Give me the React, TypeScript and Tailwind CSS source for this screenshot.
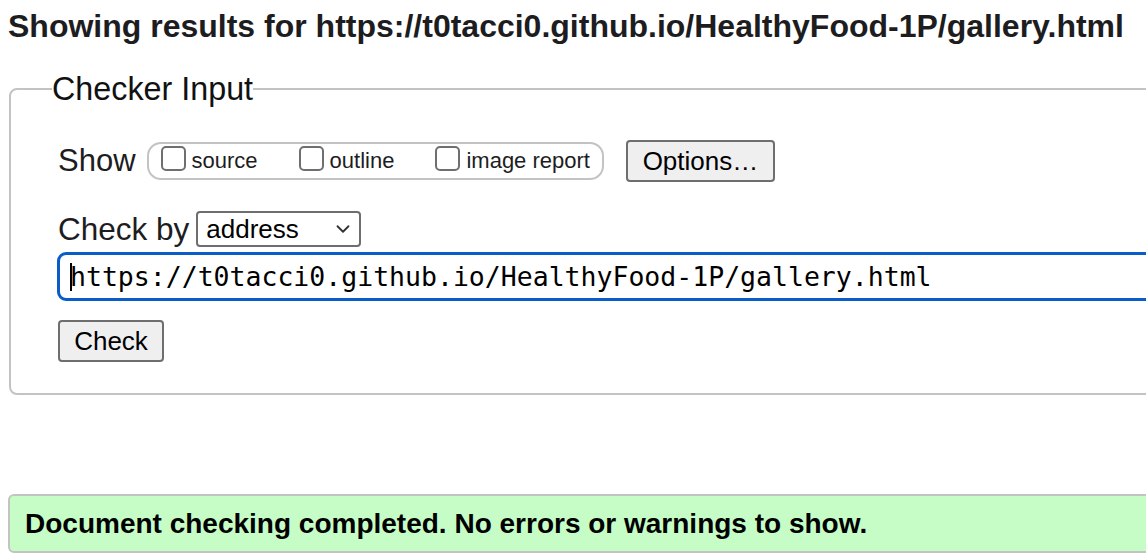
import { ChevronDown } from "lucide-react";

const sans = { fontFamily: '"Liberation Sans", Arial, sans-serif' };

function Box({ label }: { label: string }) {
  return (
    <label className="flex items-center">
      <span className="mb-[6px] h-[25px] w-[25px] rounded-[5px] border-2 border-[#6f6f6f] bg-white" />
      <span className="ml-[6px] text-[22px] leading-[26px] text-[#1d1d1f]">{label}</span>
    </label>
  );
}

export default function App() {
  return (
    <div className="h-[560px] w-[1146px] overflow-hidden bg-white" style={sans}>
      <h2 className="ml-[8px] mt-[8px] whitespace-nowrap text-[32px] font-bold leading-[36px] text-[#1d1d1f]">
        Showing results for https://t0tacci0.github.io/HealthyFood-1P/gallery.html
      </h2>

      <fieldset className="ml-[9px] mt-[27px] w-[1180px] rounded-[8px] border-2 border-[#c3c3c3] pb-[31px] pl-[47px] pt-[33px]">
        <legend className="-ml-[6px] text-[32.3px] leading-[36px] text-[#111]">Checker Input</legend>

        {/* Show */}
        <div className="flex items-center">
          <span className="text-[31px] leading-[36px] text-[#1d1d1f]">Show</span>
          <div className="ml-[11px] flex h-[38px] items-center gap-[41px] rounded-[14px] border-2 border-[#c3c3c3] pl-[12px] pr-[12px]">
            <Box label="source" />
            <Box label="outline" />
            <Box label="image report" />
          </div>
          <button className="ml-[22px] h-[42px] w-[149px] rounded-[4px] border-2 border-[#6e6e6e] bg-[#efefef] text-[26px] leading-[30px] text-black">
            Options…
          </button>
        </div>

        {/* Check by */}
        <div className="mt-[29px] flex items-center">
          <span className="text-[31.5px] leading-[36px] text-[#1d1d1f]">Check by</span>
          <div className="ml-[7px] flex h-[36px] w-[165px] items-center justify-between rounded-[4px] border-2 border-[#6e6e6e] bg-white pl-[8px] pr-[5px]">
            <span className="text-[26px] leading-[30px] text-black">address</span>
            <ChevronDown className="h-[22px] w-[22px] text-[#333]" strokeWidth={2} />
          </div>
        </div>

        {/* URL input */}
        <div className="-ml-[1px] mt-[5px] flex h-[49px] items-center rounded-[9px] border-[3px] border-[#0a5cc7] bg-white pl-[10px]">
          <span className="h-[28px] w-[2px] bg-black" />
          <span
            className="-ml-[2px] whitespace-nowrap text-[26.5px] leading-[30px] text-black"
            style={{ fontFamily: '"DejaVu Sans Mono", "Liberation Mono", monospace' }}
          >
            https://t0tacci0.github.io/HealthyFood-1P/gallery.html
          </span>
        </div>

        <button className="mt-[19px] h-[42px] w-[106px] rounded-[4px] border-2 border-[#6e6e6e] bg-[#efefef] text-[26px] leading-[30px] text-black">
          Check
        </button>
      </fieldset>

      <div className="ml-[8px] mt-[99px] flex h-[59px] w-[1180px] items-center rounded-[6px] border-2 border-[#c3c3c3] bg-[#c6fdc6] pl-[15px]">
        <span className="text-[28px] font-bold leading-[32px] text-black">
          Document checking completed. No errors or warnings to show.
        </span>
      </div>
    </div>
  );
}
